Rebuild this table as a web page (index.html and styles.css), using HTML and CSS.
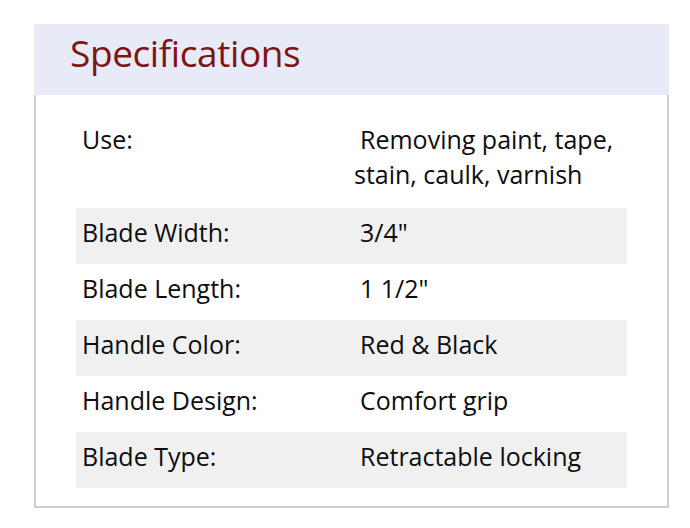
FILE: index.html
```html
<!DOCTYPE html>
<html>
<head>
<meta charset="utf-8">
<link rel="stylesheet" href="styles.css">
</head>
<body>
<div class="card">
  <div class="card-head"><h2 class="title">Specifications</h2></div>
  <div class="card-body">
    <div class="specs">
      <div class="row first"><div class="label">Use:</div><div class="value">Removing paint, tape,<br><span class="wrap">stain, caulk, varnish</span></div></div>
      <div class="row alt"><div class="label">Blade Width:</div><div class="value">3/4"</div></div>
      <div class="row"><div class="label">Blade Length:</div><div class="value">1 1/2"</div></div>
      <div class="row alt"><div class="label">Handle Color:</div><div class="value">Red &amp; Black</div></div>
      <div class="row"><div class="label">Handle Design:</div><div class="value">Comfort grip</div></div>
      <div class="row alt"><div class="label">Blade Type:</div><div class="value">Retractable locking</div></div>
    </div>
  </div>
</div>
</body>
</html>
```
FILE: styles.css
```css
html, body { margin: 0; padding: 0; background: #fff; }
body { font-family: "Open Sans", "DejaVu Sans", sans-serif; color: #0d0d0d; }
.card { margin: 24px 0 0 34px; width: 635px; }
.card-head { background: #e8ebf7; height: 71px; padding: 4px 0 0 36px; box-sizing: border-box; }
.title { margin: 0; font-weight: 400; font-size: 37px; line-height: 50px; color: #7e1414; letter-spacing: -0.4px; }
.card-body { border: 2px solid #cfcfcf; border-top: none; padding: 18px 40px 18px 40px; }
.specs { display: flex; flex-direction: column; font-size: 25px; line-height: 35px; }
.row { display: grid; grid-template-columns: 279px 1fr; height: 56px; padding-top: 7px; box-sizing: border-box; }
.row.first { height: 95px; padding-top: 9px; }
.label { padding-left: 6px; }
.value { padding-left: 5px; }
.wrap { margin-left: -6px; }
.alt { background: #f0f0f0; }
```
